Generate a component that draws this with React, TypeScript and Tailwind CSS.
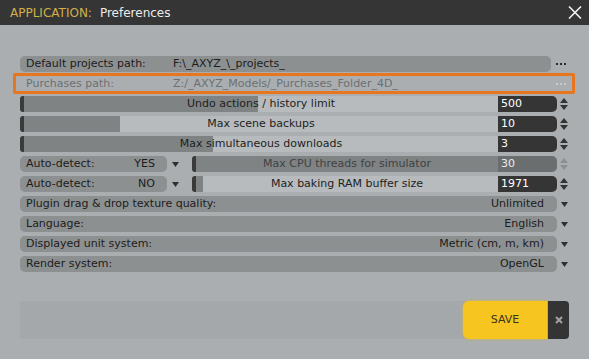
import React from 'react';

const Caret = ({ color = '#2f2f2f' }: { color?: string }) => (
  <svg width="7" height="5" viewBox="0 0 7 5">
    <polygon points="0,0 7,0 3.5,5" fill={color} />
  </svg>
);

const Spinner = ({ color = '#333333' }: { color?: string }) => (
  <svg width="8" height="12" viewBox="0 0 8 12">
    <polygon points="0,5 4,0 8,5" fill={color} />
    <polygon points="0,7 8,7 4,12" fill={color} />
  </svg>
);

const Dots = ({ color }: { color: string }) => (
  <div className="flex gap-[2px]">
    <span className="w-[2px] h-[2px]" style={{ background: color }} />
    <span className="w-[2px] h-[2px]" style={{ background: color }} />
    <span className="w-[2px] h-[2px]" style={{ background: color }} />
  </div>
);

interface SliderProps {
  label: string;
  fill: number | 'full';
  muted?: boolean;
}

function Slider({ label, fill, muted }: SliderProps) {
  return (
    <div className="flex flex-1 h-4 min-w-0">
      <div className="w-[4px] bg-[#3a3a3a] rounded-l-[3px]" />
      <div className="relative flex-1 bg-[#b7bbbd] overflow-hidden">
        <div
          className="absolute left-0 top-0 bottom-0 bg-[#7f8384]"
          style={{ width: fill === 'full' ? '100%' : `${fill}px` }}
        />
        <div
          className={`relative text-center leading-4 ${muted ? 'text-[#3f4243]' : 'text-[#1e1e1e]'}`}
        >
          {label}
        </div>
      </div>
    </div>
  );
}

function NumberBox({ value, muted }: { value: string; muted?: boolean }) {
  return (
    <>
      <div
        className={`w-[59px] h-4 shrink-0 rounded-r-[5px] pl-[3px] leading-4 ${
          muted ? 'bg-[#6b6e6f] text-[#ececec]' : 'bg-[#353535] text-white'
        }`}
      >
        {value}
      </div>
      <div className="w-[14px] shrink-0 flex items-center justify-center">
        <Spinner color={muted ? '#8c8f91' : '#333333'} />
      </div>
    </>
  );
}

function DropdownRow({ label, value }: { label: string; value: string }) {
  return (
    <div className="flex h-4 w-[551px]">
      <div className="w-[537px] flex justify-between rounded-[5px] bg-[#8d9091] pl-[6px] pr-[13px] leading-4 text-[#1c1c1c]">
        <span>{label}</span>
        <span>{value}</span>
      </div>
      <div className="w-[14px] flex items-center justify-center">
        <Caret />
      </div>
    </div>
  );
}

function AutoRow({
  value,
  label,
  fill,
  num,
  muted,
}: {
  value: string;
  label: string;
  fill: number | 'full';
  num: string;
  muted?: boolean;
}) {
  return (
    <div className="flex h-4 w-[551px]">
      <div className="w-[147px] shrink-0 flex justify-between rounded-[5px] bg-[#8d9091] pl-[6px] pr-[12px] leading-4 text-[#1c1c1c]">
        <span>Auto-detect:</span>
        <span>{value}</span>
      </div>
      <div className="w-[25px] shrink-0 flex items-center pl-[5px]">
        <Caret />
      </div>
      <Slider label={label} fill={fill} muted={muted} />
      <NumberBox value={num} muted={muted} />
    </div>
  );
}

export default function App() {
  return (
    <div className="w-[589px] h-[359px] bg-[#aaaeb0] flex flex-col font-['DejaVu_Sans',sans-serif] text-[11px] overflow-hidden">
      {/* title bar */}
      <div className="h-[25px] shrink-0 bg-[#353535] flex items-center justify-between pl-[10px] pr-[7px] text-[12px]">
        <div className="flex gap-[8px]">
          <span className="text-[#d2b04a]">APPLICATION:</span>
          <span className="text-[#ececec]">Preferences</span>
        </div>
        <svg width="14" height="13" viewBox="0 0 14 13">
          <path d="M1 0.5 L13 12.5 M13 0.5 L1 12.5" stroke="#f0f0f0" strokeWidth="1.6" />
        </svg>
      </div>

      <div className="flex flex-col gap-1 pl-[20px] pt-[31px]">
        {/* default path */}
        <div className="flex h-4 w-[551px]">
          <div className="w-[531px] flex rounded-[5px] bg-[#8d9091] leading-4 text-[#1c1c1c]">
            <span className="w-[153px] pl-[6px]">Default projects path:</span>
            <span>F:\_AXYZ_\_projects_</span>
          </div>
          <div className="w-[20px] flex items-center justify-center">
            <Dots color="#2a2a2a" />
          </div>
        </div>

        {/* purchases path (highlighted) */}
        <div className="relative flex h-4 w-[551px]">
          <div className="absolute left-[-7px] right-[-4px] top-[-3px] bottom-[-2px] border-[3px] border-[#e7761f] rounded-[2px]" />
          <div className="w-[531px] flex leading-4 text-[#6c7072]">
            <span className="w-[153px] pl-[6px]">Purchases path:</span>
            <span>Z:/_AXYZ_Models/_Purchases_Folder_4D_</span>
          </div>
          <div className="w-[20px] flex items-center justify-center">
            <Dots color="#c6c9ca" />
          </div>
        </div>

        <div className="flex h-4 w-[551px]">
          <Slider label="Undo actions / history limit" fill={234} />
          <NumberBox value="500" />
        </div>
        <div className="flex h-4 w-[551px]">
          <Slider label="Max scene backups" fill={96} />
          <NumberBox value="10" />
        </div>
        <div className="flex h-4 w-[551px]">
          <Slider label="Max simultaneous downloads" fill={189} />
          <NumberBox value="3" />
        </div>

        <AutoRow value="YES" label="Max CPU threads for simulator" fill="full" num="30" muted />
        <AutoRow value="NO" label="Max baking RAM buffer size" fill={7} num="1971" />

        <DropdownRow label="Plugin drag & drop texture quality:" value="Unlimited" />
        <DropdownRow label="Language:" value="English" />
        <DropdownRow label="Displayed unit system:" value="Metric (cm, m, km)" />
        <DropdownRow label="Render system:" value="OpenGL" />
      </div>

      {/* footer */}
      <div className="mt-auto mb-[20px] ml-[20px] w-[549px] h-[38px] bg-[#a4a8aa] rounded-[2px] flex justify-end">
        <div className="w-[84px] bg-[#f6c51f] rounded-l-[6px] shadow-[0_0_3px_#d9b53a] flex items-center justify-center text-[#3a3322]">
          SAVE
        </div>
        <div className="w-[21px] ml-[1px] bg-[#343434] rounded-r-[4px] flex items-center justify-center">
          <svg width="8" height="8" viewBox="0 0 8 8">
            <path d="M1 1 L7 7 M7 1 L1 7" stroke="#a3a3a3" strokeWidth="2" />
          </svg>
        </div>
      </div>
    </div>
  );
}
